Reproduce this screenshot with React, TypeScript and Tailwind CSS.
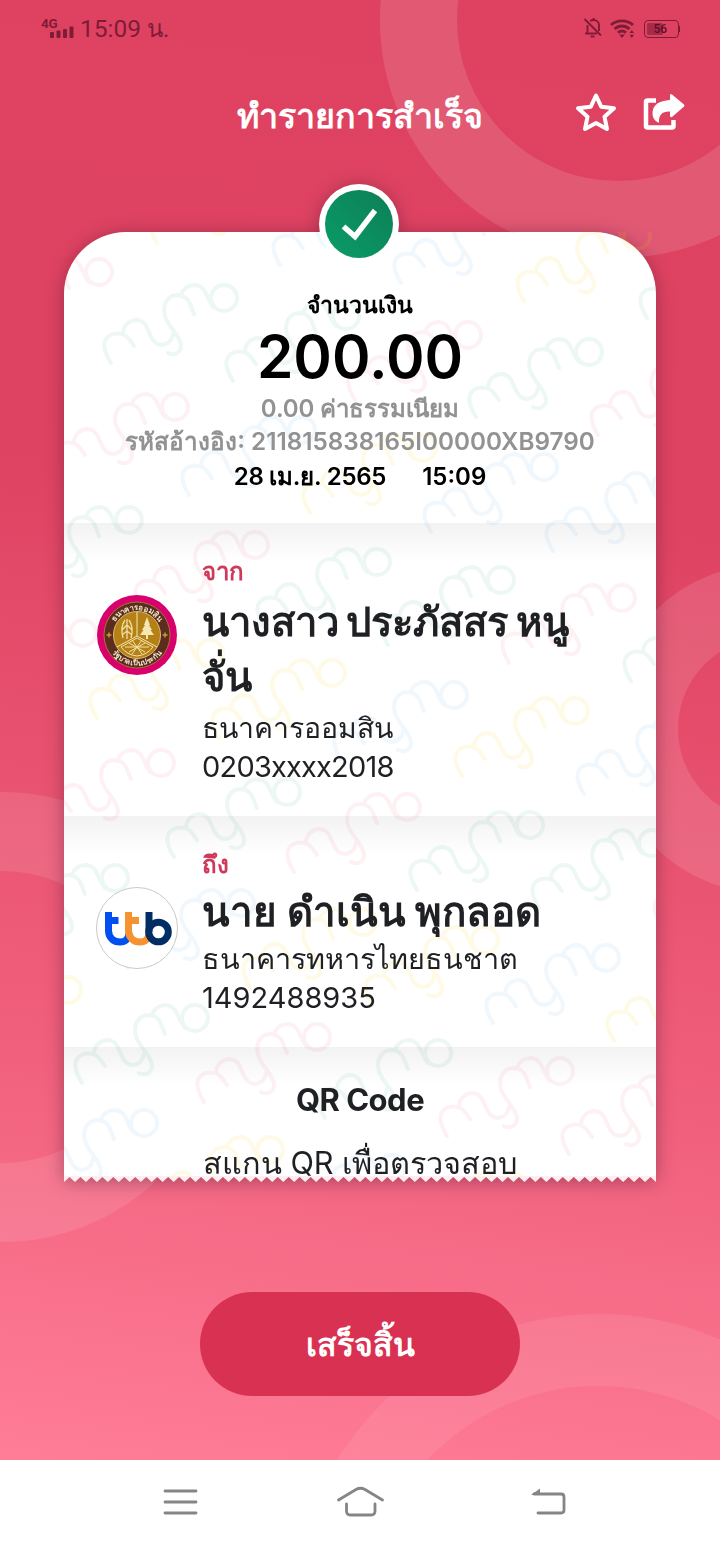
import React from "react";

const FONT = "font-['Inter',sans-serif]";

const GREEN = "rgba(25,150,105,0.08)";
const PINK = "rgba(228,40,80,0.065)";
const BLUE = "rgba(40,145,220,0.07)";
const YELLOW = "rgba(250,205,20,0.11)";

// Centre of the closing "o" of each watermark, with its colour.
const MARKS: [number, number, string][] = [
  [270, 178, YELLOW], [393, 200, BLUE], [514, 218, BLUE], [637, 236, YELLOW], [760, 253, GREEN],
  [99, 272, PINK], [224, 298, GREEN], [346, 316, GREEN], [468, 335, PINK], [589, 352, GREEN], [711, 370, PINK],
  [175, 407, PINK], [302, 430, BLUE], [423, 448, YELLOW], [544, 467, BLUE], [666, 486, BLUE],
  [129, 520, GREEN], [255, 545, PINK], [377, 562, GREEN], [501, 580, GREEN], [622, 598, PINK], [744, 616, GREEN],
  [83, 633, PINK], [210, 653, YELLOW], [332, 673, YELLOW], [454, 695, BLUE], [575, 711, YELLOW], [697, 729, BLUE],
  [161, 763, PINK], [287, 792, GREEN], [407, 807, PINK], [530, 825, GREEN], [652, 843, GREEN], [774, 860, PINK],
  [115, 878, GREEN], [241, 903, BLUE], [363, 922, YELLOW], [485, 940, YELLOW], [606, 958, BLUE], [727, 976, YELLOW],
  [68, 990, YELLOW], [195, 1018, GREEN], [317, 1037, PINK], [438, 1053, GREEN], [560, 1071, PINK], [682, 1089, PINK],
  [144, 1123, BLUE], [270, 1150, YELLOW], [392, 1168, BLUE], [513, 1186, YELLOW], [635, 1204, YELLOW],
];

function Watermark() {
  return (
    <svg className="pointer-events-none absolute left-0 top-0" width="592" height="944" viewBox="64 232 592 944" fill="none" strokeWidth="4" strokeLinecap="round" strokeLinejoin="round">
      {MARKS.map(([x, y, c]) => (
        <path
          key={`${x}-${y}`}
          transform={`translate(${x} ${y})`}
          stroke={c}
          d="M-113 65C-119 55-122 47-118 41C-112 33-100 35-96 40C-93 43-92 46-90 48M-101 36C-101 27-94 22-87 22C-76 23-77 34-71 42C-65 50-53 48-51 36M-30 16C-34 8-34-2-46-3C-57-3-62 7-59 18C-56 29-43 38-43 48C-43 55-50 58-56 55M-43-3C-41-10-35-13-29-13C-17-12-18 1-10 10M13 0A13 13 0 1 1-13 0A13 13 0 1 1 13 0"
        />
      ))}
    </svg>
  );
}

function Background() {
  return (
    <svg className="absolute left-0 top-0" width="720" height="1460" fill="none" stroke="#fff" strokeOpacity="0.12">
      <circle cx="618" cy="20" r="199.500" strokeWidth="77" />
      <circle cx="770" cy="729" r="128.500" strokeWidth="73" />
      <circle cx="2" cy="1017" r="185.500" strokeWidth="79" strokeOpacity="0.1" />
      <circle cx="598" cy="1620" r="270" strokeWidth="72" strokeOpacity="0.08" />
    </svg>
  );
}

function StatusBar() {
  return (
    <div className="flex h-14 items-center justify-between pl-[41px] pr-[40px] text-[#7e1c38]">
      <div className="flex items-center">
        <div className="relative h-8 w-[34px]">
          <span className="absolute left-0 top-[3px] font-[Roboto] text-[13.5px] font-bold leading-[16px] tracking-[-0.2px]">4G</span>
          <svg className="absolute left-[9px] top-[14px]" width="24" height="12" fill="currentColor">
            <rect x="0" y="6" width="4" height="6" rx="1" />
            <rect x="6.500" y="4.500" width="4" height="7.500" rx="1" />
            <rect x="13" y="3" width="4" height="9" rx="1" />
            <rect x="19.500" y="0.500" width="4" height="11.500" rx="1" />
          </svg>
        </div>
        <span className="pl-[5px] pt-[1px] font-['Roboto',sans-serif] text-[24.5px] leading-8">15:09 <span className="text-[24px]">น.</span></span>
      </div>
      <div className="flex items-center">
        <svg width="20" height="22" viewBox="0 0 20 22" fill="none" stroke="currentColor" strokeWidth="1.900">
          <path d="M1.500 2L18 18.500M4.500 8V15.500M2 16.500H14M16 14V8C16 5 13.500 3 10.500 3C9 3 8 3.500 7 4M10.500 3V1" />
          <path d="M7.500 19.500H11.500" />
        </svg>
        <svg className="ml-[7px] mt-[2px]" width="26" height="20" viewBox="0 0 26 20" fill="none" stroke="currentColor" strokeWidth="2.900">
          <path d="M1 6C7 0.500 17 0.500 23 6M4.500 10C9 6 15 6 19.500 10M8 13.700C10.500 11.700 13.500 11.700 16 13.700" />
          <path d="M9 15.500H15L12 19Z M19.500 14H24L21.800 11Z M19.500 15.800H24L21.800 19Z" fill="currentColor" stroke="none" />
        </svg>
        <div className="ml-[8px] mt-[2px] flex h-[18px] w-[35px] items-center rounded-[4px] border-[1.5px] border-[#7e1c38] p-[2px]">
          <div className="flex h-full w-[16px] items-center rounded-[2px] bg-[#7e1c38]/60 pl-[7px] font-[Roboto] text-[12px] font-medium leading-none text-[#5f0e26]">56</div>
        </div>
        <div className="mt-[2px] h-[6px] w-[1.5px] bg-[#7e1c38]" />
      </div>
    </div>
  );
}

function Header() {
  return (
    <div className="flex h-[120px] items-center justify-center pb-[1px]">
      <div className={`${FONT} w-[720px] text-center text-[34px] font-bold leading-[60px] text-white`}>ทำรายการสำเร็จ</div>
      <svg className="absolute left-[575px] top-[92px]" width="42" height="42" viewBox="0 0 42 42" fill="none" stroke="#fff" strokeWidth="4" strokeLinejoin="round">
        <path d="M21 3.500L26.200 14.700L39 16.300L29.500 24.800L32 37L21 31L10 37L12.500 24.800L3 16.300L15.800 14.700Z" />
      </svg>
      <svg className="absolute left-[643px] top-[92px]" width="42" height="40" viewBox="0 0 42 40">
        <path d="M13 8.500H4.500Q3 8.500 3 10V34Q3 35.500 4.500 35.500H29Q30.500 35.500 30.500 34V28" fill="none" stroke="#fff" strokeWidth="4.500" />
        <path d="M27 3.500Q27 1 29 2.500L41 12.500Q42 13.500 41 14.500L29 25Q27 26 27 23.500V19.500Q15 19 16 31Q9 28 9.500 20Q10.500 9 27 8Z" fill="#fff" />
      </svg>
    </div>
  );
}

function GsbLogo() {
  return (
    <svg width="82" height="82" viewBox="-41 -41 82 82">
      <defs>
        <path id="gsb-top" d="M-25 0A25 25 0 0 1 25 0" />
        <path id="gsb-bottom" d="M-30.500 0A30.500 30.500 0 0 0 30.500 0" />
      </defs>
      <circle r="40" fill="#d8006b" />
      <circle r="33" fill="#5a2d1f" stroke="#b28a35" strokeWidth="0.800" />
      <circle r="23.500" fill="#b58117" stroke="#d9bd72" strokeWidth="1" />
      <g fontFamily="Inter, sans-serif" fontWeight="700" fill="#f3e6cb" textAnchor="middle">
        <text fontSize="7.800"><textPath href="#gsb-top" startOffset="50%">ธนาคารออมสิน</textPath></text>
        <text fontSize="7.500"><textPath href="#gsb-bottom" startOffset="50%">รัฐบาลเป็นประกัน</textPath></text>
      </g>
      <path d="M-30.500 0H-25.500M-28-2.500V2.500M25.500 0H30.500M28-2.500V2.500" stroke="#c9973a" strokeWidth="1.500" />
      <path d="M0-23V1L-20 12M0 1L20 12" stroke="#f3e6b5" strokeWidth="1" fill="none" />
      <path d="M-10 4V-16M-14 3Q-17-8-12-15M-6 3Q-3-8-8-15M-15-5L-10-10L-5-5M-15 0L-10-4L-5 0" stroke="#f1dfa4" strokeWidth="1.300" fill="none" />
      <path d="M10-18L13-10H12L15-5H13.500L17 0H3L6.500-5H5L8-10H7ZM9 0H11V4H9Z" fill="#f5e6b4" />
      <path d="M-16 12L0 3L16 12Q10 20 0 21Q-10 20-16 12ZM-12 12H12M-8 8L8 17M8 8L-8 17M-5 5L5 19M5 5L-5 19" stroke="#f3e3a8" strokeWidth="1" fill="none" />
    </svg>
  );
}

function TtbLogo() {
  return (
    <svg width="82" height="82" viewBox="0 0 82 82" fill="none">
      <circle cx="41" cy="41" r="40.500" fill="#fff" stroke="#c9c9c9" strokeWidth="1" />
      <g strokeWidth="7">
        <path d="M12.500 25V43.500C12.500 51 18 55 24 55C29 55 33 52 33 46M12.500 33.500H22.500" stroke="#0050f0" />
        <path d="M32.500 25V43.500C32.500 51 38 55 44 55C49 55 53 52 53 46M32.500 33.500H43" stroke="#f6922f" />
        <path d="M53 25V45" stroke="#002d63" />
        <circle cx="62.500" cy="45" r="9.800" stroke="#002d63" />
      </g>
    </svg>
  );
}

interface PartyProps {
  label: string;
  logo: React.ReactNode;
  name: React.ReactNode;
  bank: React.ReactNode;
  account: React.ReactNode;
}

function Party({ label, logo, name, bank, account }: PartyProps) {
  return (
    <div className="flex pt-[34px]">
      <div className="w-[138px] pl-[32px] pt-[37px]">{logo}</div>
      <div className="flex-1 text-[#1f2023]">
        <div className="h-[30px] text-[24px] font-semibold leading-[29px] text-[#d03a5a]">{label}</div>
        {name}
        <div className="text-[28.400px] leading-[38.5px]">{bank}</div>
        <div className="text-[29px] leading-[38.5px]">{account}</div>
      </div>
    </div>
  );
}

const SECTION = "bg-linear-to-b from-black/5 from-0% to-black/0 to-[38px]";
const TEETH = 54;
const TOOTH = 592 / TEETH;
const ZIGZAG =
  "0,0 0,6 " +
  Array.from({ length: TEETH }, (_, i) => `${(i + 0.5) * TOOTH},1 ${(i + 1) * TOOTH},6`).join(" ") +
  " 592,0";

function Receipt() {
  return (
    <div className={`${FONT} relative mx-auto mt-[56px] w-[592px] drop-shadow-[0_2px_9px_rgba(70,20,40,0.42)]`}>
      <div className="h-[944px] rounded-t-[62px] bg-white">
        <Watermark />
        <div className="relative">
          <div className="flex h-[291px] flex-col items-center pt-[58px] font-semibold text-black">
            <div className="h-[30px] text-[23px] leading-[30px]">จำนวนเงิน</div>
            <div className="h-[73px] text-[58.500px] leading-[73px]">200.00</div>
            <div className="h-[32px] text-[24px] leading-[32px] tracking-[-0.1px] text-[#929292]">0.00 ค่าธรรมเนียม</div>
            <div className="h-[33px] whitespace-nowrap text-[24.250px] leading-[33px] text-[#929292]">รหัสอ้างอิง: 211815838165I00000XB9790</div>
            <div className="flex h-[36px] gap-[36px] text-[24px] leading-[37px]">
              <span className="tracking-[-0.25px]">28 เม.ย. 2565</span>
              <span>15:09</span>
            </div>
          </div>
          <div className={`h-[293px] ${SECTION}`}>
            <Party
              label="จาก"
              logo={<GsbLogo />}
              name={<div className="h-[122px] pt-[7px] text-[40px] font-bold leading-[55px] [word-spacing:-2px]">นางสาว ประภัสสร หนู<br />จั่น</div>}
              bank="ธนาคารออมสิน"
              account={<span className="tracking-[-0.8px]">0203xxxx2018</span>}
            />
          </div>
          <div className={`h-[231px] ${SECTION}`}>
            <Party
              label="ถึง"
              logo={<TtbLogo />}
              name={<div className="h-[60px] pt-[4px] text-[40.300px] font-bold leading-[55px]">นาย ดำเนิน พุกลอด</div>}
              bank={<span className="text-[28.800px]">ธนาคารทหารไทยธนชาต</span>}
              account="1492488935"
            />
          </div>
          <div className={`h-[129px] pt-[33px] text-center text-[#1f2023] ${SECTION}`}>
            <div className="text-[31px] font-bold leading-[40px] tracking-[-0.5px]">QR Code</div>
            <div className="pt-[23px] text-[30.700px] leading-[40px]">สแกน QR เพื่อตรวจสอบ</div>
          </div>
        </div>
      </div>
      <svg className="block" width="592" height="8">
        <polygon points={ZIGZAG} fill="#fdeef1" />
      </svg>
      <div className="absolute left-[255px] top-[-48px] flex h-[80px] w-[80px] items-center justify-center rounded-full bg-white">
        <div className="flex h-[68px] w-[68px] items-center justify-center rounded-full bg-linear-to-bl from-[#0c7f55] to-[#0a9c69]">
          <svg width="68" height="68" fill="none" stroke="#fff" strokeWidth="5.500">
            <path d="M18.500 36.500L30 46.500L50 20.500" />
          </svg>
        </div>
      </div>
    </div>
  );
}

function NavBar() {
  return (
    <div className="relative flex h-[84px] items-center bg-white pl-[163px]">
      <svg width="36" height="30" viewBox="0 0 36 30" stroke="#858585" strokeWidth="2.800" strokeLinecap="round">
        <path d="M2 4H33M2 15H33M2 26H33" />
      </svg>
      <svg className="ml-[137px]" width="50" height="34" viewBox="0 0 50 34" fill="none" stroke="#858585" strokeWidth="2.800" strokeLinecap="round">
        <path d="M2.500 15L20 4.500Q24.500 2 29 4.500L46.500 15M10.500 19V26Q10.500 30 14.500 30H35Q39 30 39 26V19" />
      </svg>
      <svg className="ml-[144px]" width="40" height="32" viewBox="0 0 40 32" fill="none" stroke="#858585" strokeWidth="2.800" strokeLinecap="round">
        <path d="M4 8H31Q34 8 34 11V24Q34 27 31 27H8" />
        <path d="M1 9L10 2.500V9Z" fill="#858585" stroke="none" />
      </svg>
    </div>
  );
}

export default function App() {
  return (
    <div className="flex h-[1544px] w-[720px] flex-col overflow-hidden bg-white">
      <div className="relative h-[1460px] bg-linear-[187deg,#df4261_0%,#df4362_35%,#f05f7c_72%,#ff7d97_100%]">
        <Background />
        <div className="relative">
          <StatusBar />
          <Header />
          <Receipt />
          <div className={`${FONT} mx-auto mt-[108px] h-[104px] w-[320px] rounded-full bg-[#d93151] text-center text-[32px] font-bold leading-[106px] text-white`}>
            เสร็จสิ้น
          </div>
        </div>
      </div>
      <NavBar />
    </div>
  );
}
